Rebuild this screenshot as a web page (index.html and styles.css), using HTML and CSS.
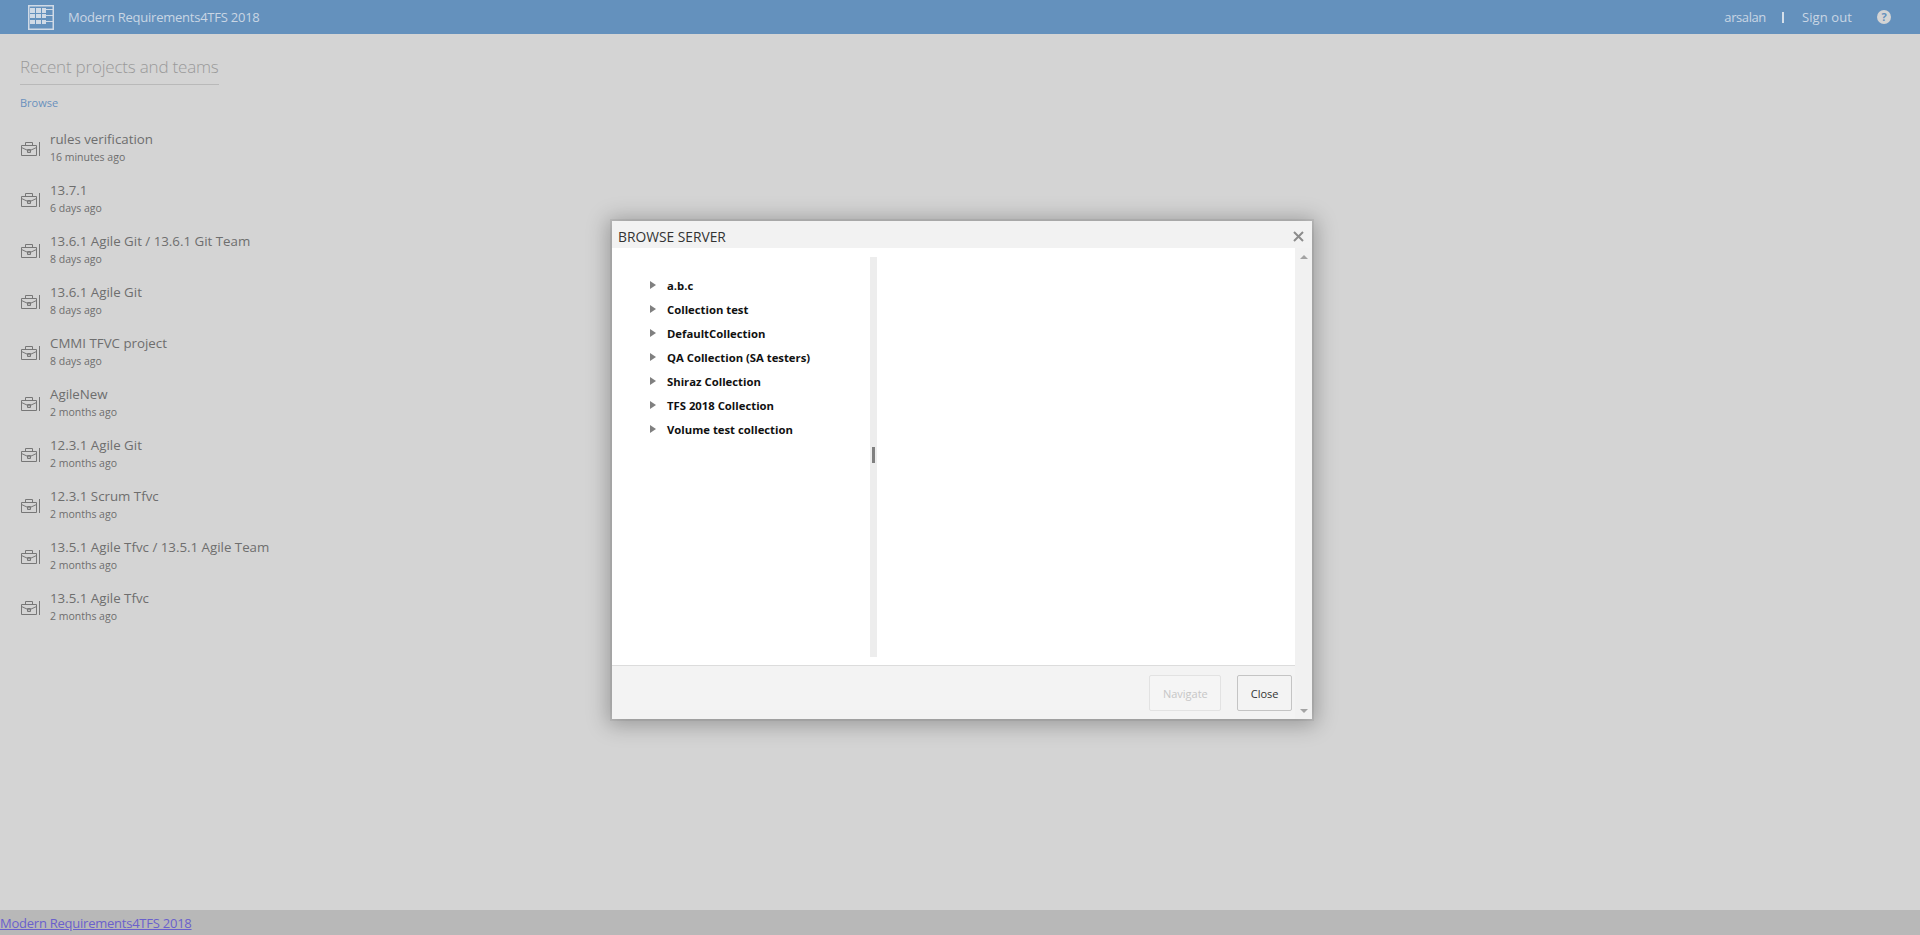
FILE: index.html
```html
<!DOCTYPE html>
<html>

  <head>
    <meta charset="UTF-8">
    <title>Modern Requirements4TFS 2018</title>
    <link rel="stylesheet" href="styles.css">
  </head>

  <body>
    <svg class="defs" width="0" height="0">
      <symbol id="case" viewBox="0 0 20 16">
        <path d="M1.500 4.500h15v10h-15zM5.500 4.500v-3h7v3M1.500 6.500l7.500 3.500 7.500-3.500M7.500 8.500h3v3h-3zM19.500 1v14" fill="none" stroke="#777" stroke-width="1"/>
      </symbol>
    </svg>

    <div class="header">
      <div class="brand">
        <svg class="logo" width="26" height="25" viewBox="0 0 26 25">
          <path d="M.75.750h24.500v23.500H.75z" fill="none" stroke="#d0dae6" stroke-width="1.500"/>
          <path d="M2 3h5v5H2zM8 3h5v5H8zM14 3h4v5h-4zM2 9h5v4H2zM8 9h5v4H8zM14 9h4v4h-4zM2 15h5v4H2zM8 15h5v4H8zM14 15h4v4h-4zM18 4h7v1h-7zM18 10h7v1h-7zM18 16h7v1h-7z" fill="#d0dae6"/>
        </svg>
        <span>Modern Requirements4TFS 2018</span>
      </div>
      <div class="user">
        <span class="username">arsalan</span>
        <span class="sep"></span>
        <span class="signout">Sign out</span>
        <span class="help">?</span>
      </div>
    </div>

    <div class="main">
      <h2 class="title">Recent projects and teams</h2>
      <a class="browse">Browse</a>
      <ul class="projects">
        <li><svg width="20" height="16"><use href="#case"/></svg><div><div class="name">rules verification</div><div class="time">16 minutes ago</div></div></li>
        <li><svg width="20" height="16"><use href="#case"/></svg><div><div class="name">13.7.1</div><div class="time">6 days ago</div></div></li>
        <li><svg width="20" height="16"><use href="#case"/></svg><div><div class="name">13.6.1 Agile Git / 13.6.1 Git Team</div><div class="time">8 days ago</div></div></li>
        <li><svg width="20" height="16"><use href="#case"/></svg><div><div class="name">13.6.1 Agile Git</div><div class="time">8 days ago</div></div></li>
        <li><svg width="20" height="16"><use href="#case"/></svg><div><div class="name">CMMI TFVC project</div><div class="time">8 days ago</div></div></li>
        <li><svg width="20" height="16"><use href="#case"/></svg><div><div class="name">AgileNew</div><div class="time">2 months ago</div></div></li>
        <li><svg width="20" height="16"><use href="#case"/></svg><div><div class="name">12.3.1 Agile Git</div><div class="time">2 months ago</div></div></li>
        <li><svg width="20" height="16"><use href="#case"/></svg><div><div class="name">12.3.1 Scrum Tfvc</div><div class="time">2 months ago</div></div></li>
        <li><svg width="20" height="16"><use href="#case"/></svg><div><div class="name">13.5.1 Agile Tfvc / 13.5.1 Agile Team</div><div class="time">2 months ago</div></div></li>
        <li><svg width="20" height="16"><use href="#case"/></svg><div><div class="name">13.5.1 Agile Tfvc</div><div class="time">2 months ago</div></div></li>
      </ul>
    </div>

    <div class="footer"><a href="#">Modern Requirements4TFS 2018</a></div>

    <div class="dialog">
      <div class="dialog-title">
        <span>BROWSE SERVER</span>
        <svg width="11" height="11" viewBox="0 0 11 11"><path d="M1 1l9 9M10 1l-9 9" stroke="#8c8c8c" stroke-width="2"/></svg>
      </div>
      <div class="dialog-body">
        <div class="dialog-content">
          <div class="panes">
            <ul class="tree">
              <li>a.b.c</li>
              <li>Collection test</li>
              <li>DefaultCollection</li>
              <li>QA Collection (SA testers)</li>
              <li>Shiraz Collection</li>
              <li>TFS 2018 Collection</li>
              <li>Volume test collection</li>
            </ul>
            <div class="splitter"><div class="handle"></div></div>
          </div>
          <div class="buttons">
            <button class="btn disabled">Navigate</button>
            <button class="btn">Close</button>
          </div>
        </div>
        <div class="scrollbar">
          <div class="arrow-up"></div>
          <div class="arrow-down"></div>
        </div>
      </div>
    </div>
  </body>

</html>
```

FILE: styles.css
```css
html, body {
  margin: 0;
  height: 100%;
}

body {
  display: flex;
  flex-direction: column;
  height: 935px;
  overflow: hidden;
  background: #d4d4d4;
  font-family: "Open Sans", "Liberation Sans", sans-serif;
  color: #6a6a6a;
}

.defs {
  position: absolute;
}

.header {
  display: flex;
  justify-content: space-between;
  align-items: center;
  height: 34px;
  background: #6491bd;
  color: #c9d6e4;
  font-size: 13px;
}

.brand {
  display: flex;
  align-items: center;
  margin-left: 28px;
  letter-spacing: -.24px;
}

.logo {
  margin-right: 14px;
}

.user {
  display: flex;
  align-items: center;
  margin-right: 29px;
}

.username {
  letter-spacing: -.4px;
}

.signout {
  letter-spacing: .1px;
}

.sep {
  width: 2px;
  height: 11px;
  margin: 1px 18px 0 16px;
  background: #d4dfea;
}

.help {
  width: 14px;
  height: 14px;
  margin-left: 25px;
  border-radius: 50%;
  background: #d4d4d4;
  color: #6491bd;
  font-size: 11px;
  font-weight: 700;
  line-height: 14px;
  text-align: center;
}

.main {
  flex: 1;
  padding: 21px 0 0 20px;
}

.title {
  width: 199px;
  margin: 0;
  padding-bottom: 5px;
  border-bottom: 1px solid #b9b9b9;
  font-size: 17px;
  font-weight: 300;
  line-height: 24px;
  letter-spacing: -.2px;
  color: #9a9a9a;
  white-space: nowrap;
}

.browse {
  display: block;
  margin-top: 10px;
  font-size: 11px;
  line-height: 16px;
  color: #6a90bd;
}

.projects {
  margin: 11px 0 0;
  padding: 0;
  list-style: none;
}

.projects li {
  display: flex;
  align-items: center;
  height: 51px;
}

.projects svg {
  margin: 3px 10px 0 0;
}

.name {
  font-size: 13.300px;
  line-height: 18px;
  color: #6e6e6e;
}

.time {
  margin-top: 1px;
  font-size: 10.500px;
  line-height: 16px;
  color: #6e6e6e;
}

.footer {
  height: 25px;
  background: #b8b8b8;
  font-size: 13px;
  line-height: 27px;
  letter-spacing: -.24px;
}

.footer a {
  color: #6a60cc;
}

.dialog {
  position: absolute;
  top: 221px;
  left: 612px;
  display: flex;
  flex-direction: column;
  width: 700px;
  height: 498px;
  background: #fff;
  box-shadow: 0 0 0 2px rgba(0, 0, 0, .06), 0 2px 20px 4px rgba(0, 0, 0, .28);
}

.dialog-title {
  display: flex;
  justify-content: space-between;
  align-items: center;
  height: 27px;
  box-sizing: border-box;
  padding: 4px 8px 0 6px;
  background: #f2f2f2;
  font-size: 13.800px;
  color: #333;
}

.dialog-body {
  flex: 1;
  display: flex;
}

.dialog-content {
  flex: 1;
  display: flex;
  flex-direction: column;
}

.panes {
  flex: 1;
  display: flex;
  padding: 9px 0 8px;
}

.tree {
  width: 258px;
  margin: 0;
  padding: 17px 0 0 0;
  list-style: none;
}

.tree li {
  position: relative;
  height: 24px;
  padding-left: 55px;
  font-size: 11.300px;
  font-weight: 700;
  line-height: 24px;
  color: #111;
}

.tree li:before {
  content: "";
  position: absolute;
  left: 38px;
  top: 7px;
  border-left: 6px solid #808080;
  border-top: 4px solid transparent;
  border-bottom: 4px solid transparent;
}

.splitter {
  display: flex;
  justify-content: center;
  align-items: center;
  width: 7px;
  padding-bottom: 5px;
  box-sizing: border-box;
  background: #ededed;
}

.handle {
  width: 3px;
  height: 16px;
  background: #808080;
}

.buttons {
  display: flex;
  justify-content: flex-end;
  gap: 16px;
  height: 54px;
  box-sizing: border-box;
  padding: 9px 3px 0 0;
  border-top: 1px solid #dcdcdc;
  background: #f3f3f3;
}

.btn {
  height: 36px;
  padding: 0 12.500px;
  border: 1px solid #c4c4c4;
  border-radius: 2px;
  background: #f3f3f3;
  font-family: "Open Sans", "Liberation Sans", sans-serif;
  font-size: 11px;
  color: #333;
}

.btn.disabled {
  border-color: #e2e2e2;
  background: #f5f5f5;
  color: #c6c6c6;
}

.scrollbar {
  display: flex;
  flex-direction: column;
  justify-content: space-between;
  align-items: center;
  width: 17px;
  padding: 7px 0 6px;
  box-sizing: border-box;
  background: #f1f1f1;
}

.arrow-up {
  border-bottom: 4px solid #a3a3a3;
  border-left: 4px solid transparent;
  border-right: 4px solid transparent;
}

.arrow-down {
  border-top: 4px solid #a3a3a3;
  border-left: 4px solid transparent;
  border-right: 4px solid transparent;
}
```
